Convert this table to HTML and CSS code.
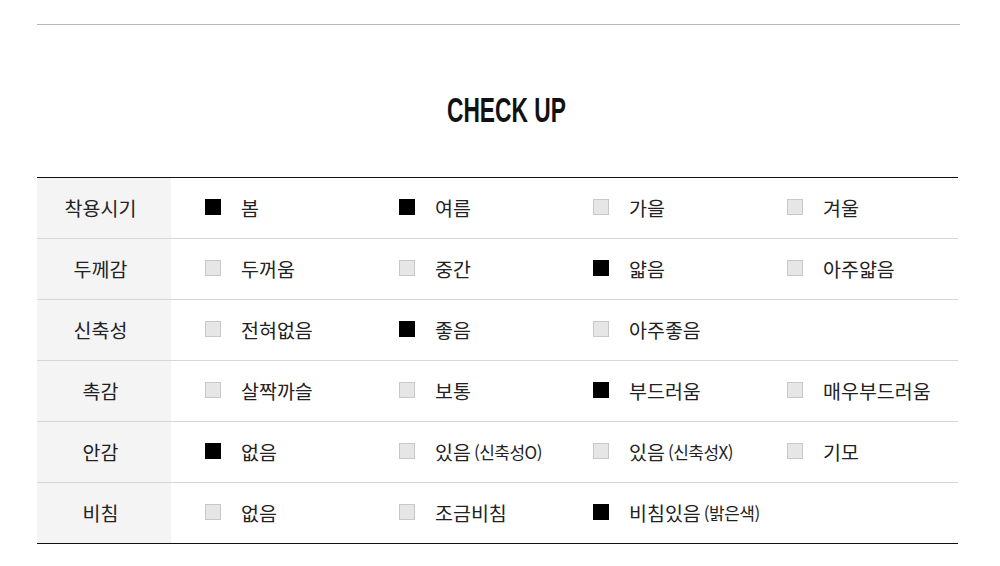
FILE: index.html
```html
<!DOCTYPE html>
<html lang="ko">
<head>
<meta charset="utf-8">
<title>CHECK UP</title>
<link rel="stylesheet" href="styles.css">
</head>
<body>
<div class="page">
  <div class="topline"></div>
  <h2 class="title"><span class="title-text">CHECK UP</span></h2>
  <table class="check">
    <colgroup>
      <col class="col-head">
      <col>
    </colgroup>
    <tr>
      <th>착용시기</th>
      <td>
        <div class="opts">
          <span class="opt"><i class="box on"></i>봄</span>
          <span class="opt"><i class="box on"></i>여름</span>
          <span class="opt"><i class="box"></i>가을</span>
          <span class="opt"><i class="box"></i>겨울</span>
        </div>
      </td>
    </tr>
    <tr>
      <th>두께감</th>
      <td>
        <div class="opts">
          <span class="opt"><i class="box"></i>두꺼움</span>
          <span class="opt"><i class="box"></i>중간</span>
          <span class="opt"><i class="box on"></i>얇음</span>
          <span class="opt"><i class="box"></i>아주얇음</span>
        </div>
      </td>
    </tr>
    <tr>
      <th>신축성</th>
      <td>
        <div class="opts">
          <span class="opt"><i class="box"></i>전혀없음</span>
          <span class="opt"><i class="box on"></i>좋음</span>
          <span class="opt"><i class="box"></i>아주좋음</span>
        </div>
      </td>
    </tr>
    <tr>
      <th>촉감</th>
      <td>
        <div class="opts">
          <span class="opt"><i class="box"></i>살짝까슬</span>
          <span class="opt"><i class="box"></i>보통</span>
          <span class="opt"><i class="box on"></i>부드러움</span>
          <span class="opt"><i class="box"></i>매우부드러움</span>
        </div>
      </td>
    </tr>
    <tr>
      <th>안감</th>
      <td>
        <div class="opts">
          <span class="opt"><i class="box on"></i>없음</span>
          <span class="opt"><i class="box"></i>있음<small>(신축성O)</small></span>
          <span class="opt"><i class="box"></i>있음<small>(신축성X)</small></span>
          <span class="opt"><i class="box"></i>기모</span>
        </div>
      </td>
    </tr>
    <tr>
      <th>비침</th>
      <td>
        <div class="opts">
          <span class="opt"><i class="box"></i>없음</span>
          <span class="opt"><i class="box"></i>조금비침</span>
          <span class="opt"><i class="box on"></i>비침있음<small>(밝은색)</small></span>
        </div>
      </td>
    </tr>
  </table>
</div>
</body>
</html>
```
FILE: styles.css
```css
html, body {
  margin: 0;
  padding: 0;
  background: #fff;
}
body {
  font-family: "Noto Sans CJK KR", "Noto Sans", sans-serif;
  color: #222;
}
.page {
  padding: 24px 40px 0 37px;
}
.topline {
  height: 1px;
  background: #b8b8b8;
}
.title {
  margin: 65px 0 47px;
  padding-left: 16px;
  height: 40px;
  line-height: 40px;
  text-align: center;
  font-family: "Liberation Sans", Arial, sans-serif;
  font-weight: 700;
  font-size: 35px;
  color: #111;
}
.title-text {
  display: inline-block;
  transform: scaleX(0.65);
  transform-origin: center;
}
.check {
  width: 921px;
  table-layout: fixed;
  border-collapse: collapse;
  border-top: 1px solid #111;
  border-bottom: 1px solid #111;
}
.col-head {
  width: 134px;
}
.check tr + tr th,
.check tr + tr td {
  border-top: 1px solid #d6d6d6;
}
.check th {
  height: 58px;
  padding: 0 7px 2px 0;
  background: #f4f4f4;
  font-weight: 400;
  font-size: 19.5px;
  text-align: center;
  vertical-align: middle;
  color: #222;
}
.check td {
  padding: 0 0 2px 34px;
  vertical-align: middle;
}
.opts {
  display: flex;
  align-items: center;
}
.opt {
  display: flex;
  align-items: center;
  width: 194px;
  flex: none;
  font-size: 19.5px;
  color: #222;
  white-space: nowrap;
}
.opt small {
  font-size: 17px;
  letter-spacing: -0.5px;
  margin-left: 3px;
}
.box {
  display: block;
  width: 16px;
  height: 16px;
  box-sizing: border-box;
  margin-right: 20px;
  background: #e6e6e6;
  border: 1px solid #c8c8c8;
}
.box.on {
  background: #000;
  border-color: #000;
}
```
